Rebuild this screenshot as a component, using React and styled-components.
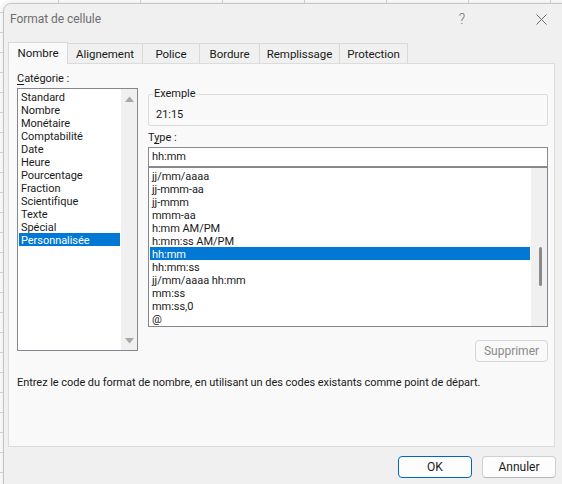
import styled, { createGlobalStyle } from "styled-components"

const Global = createGlobalStyle`
  html, body {
    margin: 0;
    padding: 0;
    overflow: hidden;
  }
  body {
    width: 562px;
    height: 484px;
    background-color: #ffffff;
    background-image:
      linear-gradient(to right, #d6d6d6 1px, transparent 1px),
      linear-gradient(to bottom, #d6d6d6 1px, transparent 1px);
    background-size: 82px 20px;
    background-position: 58px 12px;
    font-family: Roboto, "Noto Sans", sans-serif;
    font-size: 11px;
    letter-spacing: -0.05px;
    color: #1a1a1a;
  }
`

const Fenetre = styled.div`
  margin: 3px 0 0 3px;
  width: 575px;
  height: 500px;
  box-sizing: border-box;
  background: #f0f0f0;
  border: 1px solid #c4c4c4;
  border-radius: 8px 0 0 0;
  box-shadow: 0 0 8px rgba(0, 0, 0, 0.12);
`

const BarreTitre = styled.div`
  height: 30px;
  display: flex;
  align-items: center;
  padding-left: 6px;
  width: 552px;
  box-sizing: border-box;
`

const Titre = styled.span`
  flex: 1;
  color: #6e6e6e;
  font-size: 12px;
`

const BoutonTitre = styled.span`
  width: ${(p) => p.$w}px;
  margin-right: ${(p) => p.$mr || 0}px;
  height: 30px;
  display: flex;
  align-items: center;
  justify-content: center;
  color: #707070;
  font-size: 14px;
  font-weight: 300;
`

const Contenu = styled.div`
  width: 552px;
  padding-top: 8px;
`

const Onglets = styled.div`
  display: flex;
  align-items: flex-end;
  padding-left: 4px;
  height: 22px;
  margin-bottom: -1px;
  position: relative;
  z-index: 1;
`

const Onglet = styled.div`
  box-sizing: border-box;
  height: ${(p) => (p.$actif ? 22 : 21)}px;
  width: ${(p) => p.$w}px;
  display: flex;
  align-items: center;
  justify-content: center;
  padding-bottom: ${(p) => (p.$actif ? 1 : 0)}px;
  background: ${(p) => (p.$actif ? "#f9f9f9" : "#f0f0f0")};
  border: 1px solid #d9d9d9;
  border-left: ${(p) => (p.$actif ? "1px solid #d9d9d9" : "none")};
  border-bottom: ${(p) => (p.$actif ? "none" : "1px solid #dcdcdc")};
  color: #1a1a1a;
  font-size: 11.5px;
`

const Panneau = styled.div`
  margin-left: 4px;
  width: 547px;
  height: 384px;
  box-sizing: border-box;
  background: #f9f9f9;
  border: 1px solid #dcdcdc;
  padding: 6px 6px 0 8px;
`

const Haut = styled.div`
  display: grid;
  grid-template-columns: 121px 400px;
  column-gap: 10px;
`

const Colonne = styled.div`
  display: flex;
  flex-direction: column;
`

const Etiquette = styled.div`
  height: 18px;
  line-height: 18px;
  margin-top: ${(p) => p.$mt || 0}px;
`

const Souligne = styled.span`
  text-decoration: underline;
  text-underline-offset: 2px;
`

const Liste = styled.div`
  box-sizing: border-box;
  height: ${(p) => p.$h}px;
  border: 1px solid #828790;
  background: #ffffff;
  display: flex;
`

const Items = styled.div`
  flex: 1;
  padding: 1px;
  overflow: hidden;
`

const Item = styled.div`
  height: 13px;
  line-height: 15px;
  padding-left: 2px;
  white-space: nowrap;
  overflow: hidden;
  background: ${(p) => (p.$sel ? "#0078d4" : "transparent")};
  color: ${(p) => (p.$sel ? "#ffffff" : "#1a1a1a")};
`

const Defilement = styled.div`
  width: 16px;
  background: #f0f0f0;
  display: flex;
  flex-direction: column;
  align-items: center;
  justify-content: ${(p) => (p.$fleches ? "space-between" : "flex-start")};
  padding: ${(p) => (p.$fleches ? "7px 0 6px" : "79px 0 0")};
`

const Fleche = styled.svg`
  width: 9px;
  height: 6px;
  display: block;
`

const Curseur = styled.div`
  width: 3px;
  height: 39px;
  margin-left: 3px;
  background: #8a8a8a;
  border-radius: 2px;
`

const Groupe = styled.fieldset`
  margin: 17px 0 0 0;
  min-width: 0;
  padding: 0 0 3px 4px;
  border: 1px solid #dcdcdc;
  border-radius: 2px;
`

const Legende = styled.legend`
  padding: 0 1px;
  line-height: 14px;
  height: 14px;
`

const Valeur = styled.div`
  margin-top: 7px;
  padding-left: 3px;
  line-height: 14px;
`

const Champ = styled.div`
  box-sizing: border-box;
  height: 20px;
  border: 1px solid #8c8c8c;
  background: #ffffff;
  padding-left: 3px;
  line-height: 18px;
`

const LigneBouton = styled.div`
  display: flex;
  justify-content: flex-end;
  margin-top: 13px;
`

const Bouton = styled.button`
  box-sizing: border-box;
  width: ${(p) => p.$w}px;
  height: 22px;
  padding: 0;
  border-radius: 4px;
  font-family: inherit;
  font-size: 12px;
  background: ${(p) => (p.$off ? "#f9f9f9" : "#fdfdfd")};
  color: ${(p) => (p.$off ? "#8a8a8a" : "#1a1a1a")};
  border: 1px solid
    ${(p) => (p.$defaut ? "#0067c0" : p.$off ? "#d6d6d6" : "#d0d0d0")};
  border-bottom-color: ${(p) =>
    p.$defaut ? "#0067c0" : p.$off ? "#d6d6d6" : "#b8b8b8"};
`

const Description = styled.p`
  margin: 13px 0 0 0;
  line-height: 16px;
  font-size: 11px;
`

const Pied = styled.div`
  display: flex;
  justify-content: flex-end;
  gap: 10px;
  padding-top: 9px;
`

const categories = [
  "Standard",
  "Nombre",
  "Monétaire",
  "Comptabilité",
  "Date",
  "Heure",
  "Pourcentage",
  "Fraction",
  "Scientifique",
  "Texte",
  "Spécial",
  "Personnalisée",
]

const types = [
  "jj/mm/aaaa",
  "jj-mmm-aa",
  "jj-mmm",
  "mmm-aa",
  "h:mm AM/PM",
  "h:mm:ss AM/PM",
  "hh:mm",
  "hh:mm:ss",
  "jj/mm/aaaa hh:mm",
  "mm:ss",
  "mm:ss,0",
  "@",
]

const onglets = [
  ["Nombre", 60],
  ["Alignement", 75],
  ["Police", 57],
  ["Bordure", 60],
  ["Remplissage", 80],
  ["Protection", 68],
]

function Croix() {
  return (
    <svg width="11" height="11" viewBox="0 0 11 11">
      <path d="M0.5 0.5 L10.5 10.5 M10.5 0.5 L0.5 10.5" stroke="#6a6a6a" strokeWidth="1" />
    </svg>
  )
}

function FormatCellule() {
  return (
    <>
      <Global />
      <Fenetre>
        <BarreTitre>
          <Titre>Format de cellule</Titre>
          <BoutonTitre $w={40} $mr={44}>?</BoutonTitre>
          <BoutonTitre $w={30}>
            <Croix />
          </BoutonTitre>
        </BarreTitre>
        <Contenu>
          <Onglets>
            {onglets.map(([nom, w], i) => (
              <Onglet key={nom} $w={w} $actif={i === 0}>
                {nom}
              </Onglet>
            ))}
          </Onglets>
          <Panneau>
            <Haut>
              <Colonne>
                <Etiquette>
                  <Souligne>C</Souligne>atégorie :
                </Etiquette>
                <Liste $h={263}>
                  <Items>
                    {categories.map((c) => (
                      <Item key={c} $sel={c === "Personnalisée"}>
                        {c}
                      </Item>
                    ))}
                  </Items>
                  <Defilement $fleches>
                    <Fleche viewBox="0 0 9 6">
                      <path d="M0 6 L4.5 0.5 L9 6 Z" fill="#a8a8a8" />
                    </Fleche>
                    <Fleche viewBox="0 0 9 6">
                      <path d="M0 0 L4.5 5.5 L9 0 Z" fill="#a8a8a8" />
                    </Fleche>
                  </Defilement>
                </Liste>
              </Colonne>
              <Colonne>
                <Groupe>
                  <Legende>Exemple</Legende>
                  <Valeur>21:15</Valeur>
                </Groupe>
                <Etiquette $mt={3}>
                  T<Souligne>y</Souligne>pe :
                </Etiquette>
                <Champ>hh:mm</Champ>
                <Liste $h={160}>
                  <Items>
                    {types.map((t) => (
                      <Item key={t} $sel={t === "hh:mm"}>
                        {t}
                      </Item>
                    ))}
                  </Items>
                  <Defilement>
                    <Curseur />
                  </Defilement>
                </Liste>
                <LigneBouton>
                  <Bouton $w={73} $off disabled>
                    Supprimer
                  </Bouton>
                </LigneBouton>
              </Colonne>
            </Haut>
            <Description>
              Entrez le code du format de nombre, en utilisant un des codes existants comme point de départ.
            </Description>
          </Panneau>
          <Pied>
            <Bouton $w={74} $defaut>
              OK
            </Bouton>
            <Bouton $w={74}>Annuler</Bouton>
          </Pied>
        </Contenu>
      </Fenetre>
    </>
  )
}

export default FormatCellule
